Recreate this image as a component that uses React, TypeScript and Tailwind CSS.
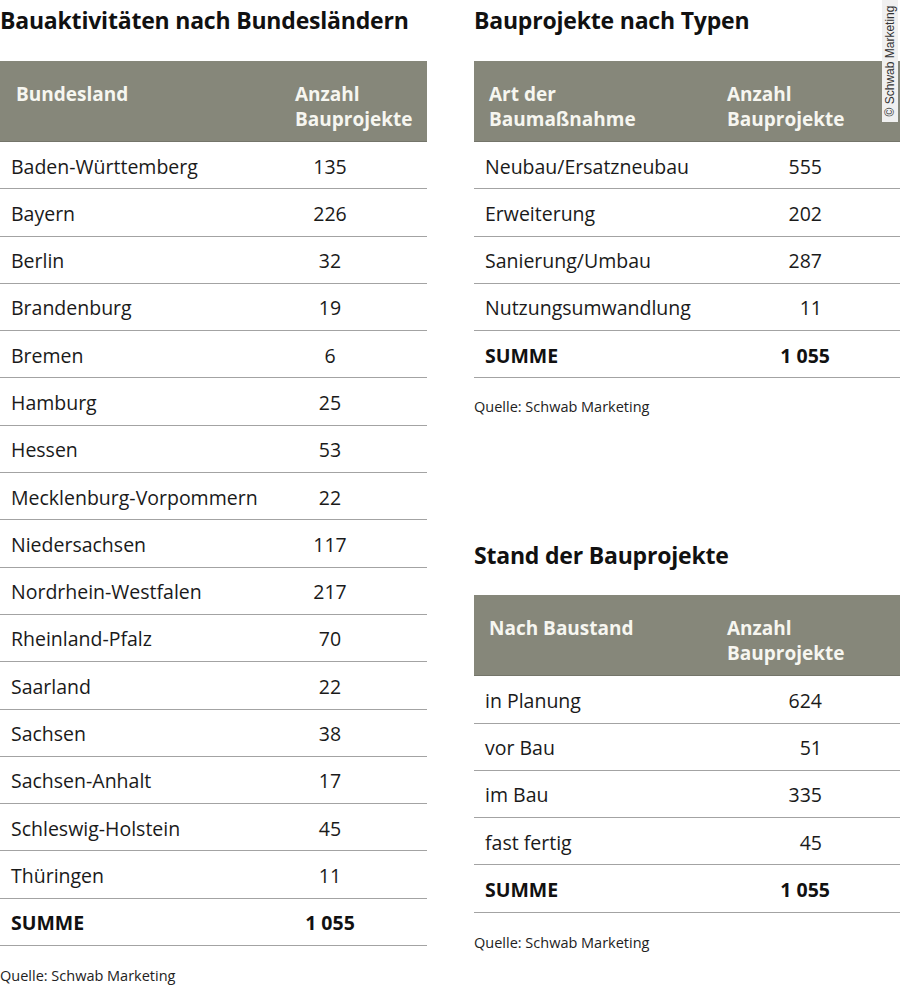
import React from "react";

const F = { fontFamily: '"Open Sans", "Noto Sans", sans-serif' };

type Row = [string, string];

function Header({ left, right, numX, pl }: { left: React.ReactNode; right: React.ReactNode; numX: string; pl: string }) {
  return (
    <div className={`h-[81px] bg-[#86877a] border-b border-[#74756a] flex text-[#f6f6f0] font-bold text-[19px] leading-[25px] pt-[21px] ${pl}`}>
      <div className="flex-1">{left}</div>
      <div className={numX}>{right}</div>
    </div>
  );
}

function Table({
  rows,
  sum,
  numCls,
  sumCls,
  header,
}: {
  rows: Row[];
  sum: string;
  numCls: string;
  sumCls: string;
  header: React.ReactNode;
}) {
  return (
    <div>
      {header}
      {rows.map(([a, b]) => (
        <div key={a} className="h-[47.3px] pt-[2px] border-b border-[#a3a3a3] flex items-center text-[19.5px] text-[#1a1a1a] pl-[11px]">
          <div className="flex-1">{a}</div>
          <div className={numCls}>{b}</div>
        </div>
      ))}
      <div className="h-[47.3px] pt-[2px] border-b border-[#a3a3a3] flex items-center text-[19.5px] text-[#111] font-bold pl-[11px]">
        <div className="flex-1">SUMME</div>
        <div className={sumCls}>{sum}</div>
      </div>
    </div>
  );
}

export default function App() {
  const left: Row[] = [
    ["Baden-Württemberg", "135"],
    ["Bayern", "226"],
    ["Berlin", "32"],
    ["Brandenburg", "19"],
    ["Bremen", "6"],
    ["Hamburg", "25"],
    ["Hessen", "53"],
    ["Mecklenburg-Vorpommern", "22"],
    ["Niedersachsen", "117"],
    ["Nordrhein-Westfalen", "217"],
    ["Rheinland-Pfalz", "70"],
    ["Saarland", "22"],
    ["Sachsen", "38"],
    ["Sachsen-Anhalt", "17"],
    ["Schleswig-Holstein", "45"],
    ["Thüringen", "11"],
  ];
  const types: Row[] = [
    ["Neubau/Ersatzneubau", "555"],
    ["Erweiterung", "202"],
    ["Sanierung/Umbau", "287"],
    ["Nutzungsumwandlung", "11"],
  ];
  const stand: Row[] = [
    ["in Planung", "624"],
    ["vor Bau", "51"],
    ["im Bau", "335"],
    ["fast fertig", "45"],
  ];
  const ab = (
    <>
      Anzahl
      <br />
      Bauprojekte
    </>
  );
  return (
    <div className="w-[900px] h-[988px] bg-white relative flex gap-[47px]" style={F}>
      <div className="w-[427px]">
        <h2 className="text-[23px] leading-[30px] font-bold text-[#111] pt-[5px] h-[61px] tracking-[-0.2px] whitespace-nowrap">
          Bauaktivitäten nach Bundesländern
        </h2>
        <Table
          rows={left}
          sum="1 055"
          numCls="w-[70px] mr-[62px] text-center"
          sumCls="w-[70px] mr-[62px] text-center"
          header={<Header pl="pl-[16px]" left="Bundesland" numX="w-[132px]" right={ab} />}
        />
        <div className="text-[14.5px] text-[#222] mt-[19px]">Quelle: Schwab Marketing</div>
      </div>
      <div className="w-[426px]">
        <h2 className="text-[23px] leading-[30px] font-bold text-[#111] pt-[5px] h-[61px] tracking-[-0.2px]">
          Bauprojekte nach Typen
        </h2>
        <Table
          rows={types}
          sum="1 055"
          numCls="w-[80px] mr-[78px] text-right"
          sumCls="w-[90px] mr-[70px] text-right"
          header={
            <Header
              pl="pl-[15px]"
              left={
                <>
                  Art der
                  <br />
                  Baumaßnahme
                </>
              }
              numX="w-[173px]"
              right={ab}
            />
          }
        />
        <div className="text-[14.5px] text-[#222] mt-[18px]">Quelle: Schwab Marketing</div>
        <h2 className="text-[23px] leading-[30px] font-bold text-[#111] mt-[122px] h-[55px] tracking-[-0.2px]">
          Stand der Bauprojekte
        </h2>
        <Table
          rows={stand}
          sum="1 055"
          numCls="w-[80px] mr-[78px] text-right"
          sumCls="w-[90px] mr-[70px] text-right"
          header={<Header pl="pl-[15px]" left="Nach Baustand" numX="w-[173px]" right={ab} />}
        />
        <div className="text-[14.5px] text-[#222] mt-[19px]">Quelle: Schwab Marketing</div>
      </div>
      <div className="absolute right-[2px] top-0 w-[16px] h-[122px] bg-[#f0f0f0] flex items-center justify-center">
        <div
          className="-rotate-90 whitespace-nowrap text-[12px] text-[#333]"
          style={{ fontFamily: '"Liberation Sans", Arial, sans-serif' }}
        >
          © Schwab Marketing
        </div>
      </div>
    </div>
  );
}
